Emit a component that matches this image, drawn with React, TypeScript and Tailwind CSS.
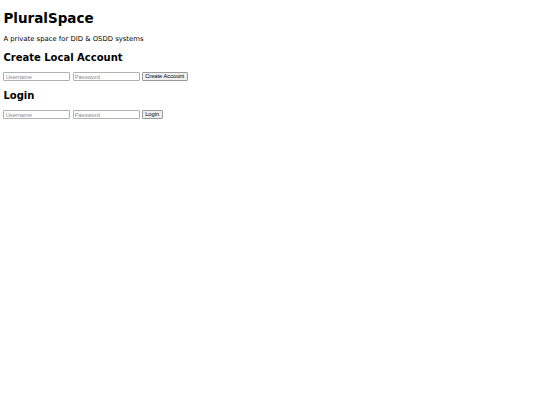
import React from "react";

const sans = "font-['DejaVu_Sans',sans-serif]";

function Field({ placeholder }: { placeholder: string }) {
  return (
    <input
      type="text"
      placeholder={placeholder}
      className="box-border h-[9px] w-[67px] rounded-[1px] border border-[#b0b0b0] bg-white px-[1.3px] py-0 font-['Liberation_Sans',Arial,sans-serif] text-[5.7px] leading-[6.5px] text-black outline-none placeholder:text-[#8a8a8a]"
    />
  );
}

function Btn({ label }: { label: string }) {
  return (
    <button
      type="button"
      className="box-border h-[9px] rounded-[1px] border border-[#9a9a9a] bg-[#efefef] px-[2.5px] py-0 font-['Liberation_Sans',Arial,sans-serif] text-[5.7px] leading-[6.5px] text-black"
    >
      {label}
    </button>
  );
}

function FormRow({ button, top }: { button: string; top: string }) {
  return (
    <div className={`${top} flex h-[9px] items-center gap-[2.15px]`}>
      <Field placeholder="Username" />
      <Field placeholder="Password" />
      <Btn label={button} />
    </div>
  );
}

export default function App() {
  return (
    <div className={`min-h-[405px] w-full bg-white px-[3.4px] text-black ${sans}`}>
      <div className="flex flex-col">
        <h1 className="mt-[10.6px] text-[13.5px] font-bold leading-[15.7px]">PluralSpace</h1>
        <p className="mt-[9.3px] text-[6.85px] leading-[7.86px]">A private space for DID &amp; OSDD systems</p>
        <h2 className="mt-[8.8px] text-[10px] font-bold leading-[11.8px]">Create Local Account</h2>
        <FormRow button="Create Account" top="mt-[8.2px]" />
        <h2 className="mt-[8.6px] text-[10px] font-bold leading-[11.8px]">Login</h2>
        <FormRow button="Login" top="mt-[8.6px]" />
      </div>
    </div>
  );
}
